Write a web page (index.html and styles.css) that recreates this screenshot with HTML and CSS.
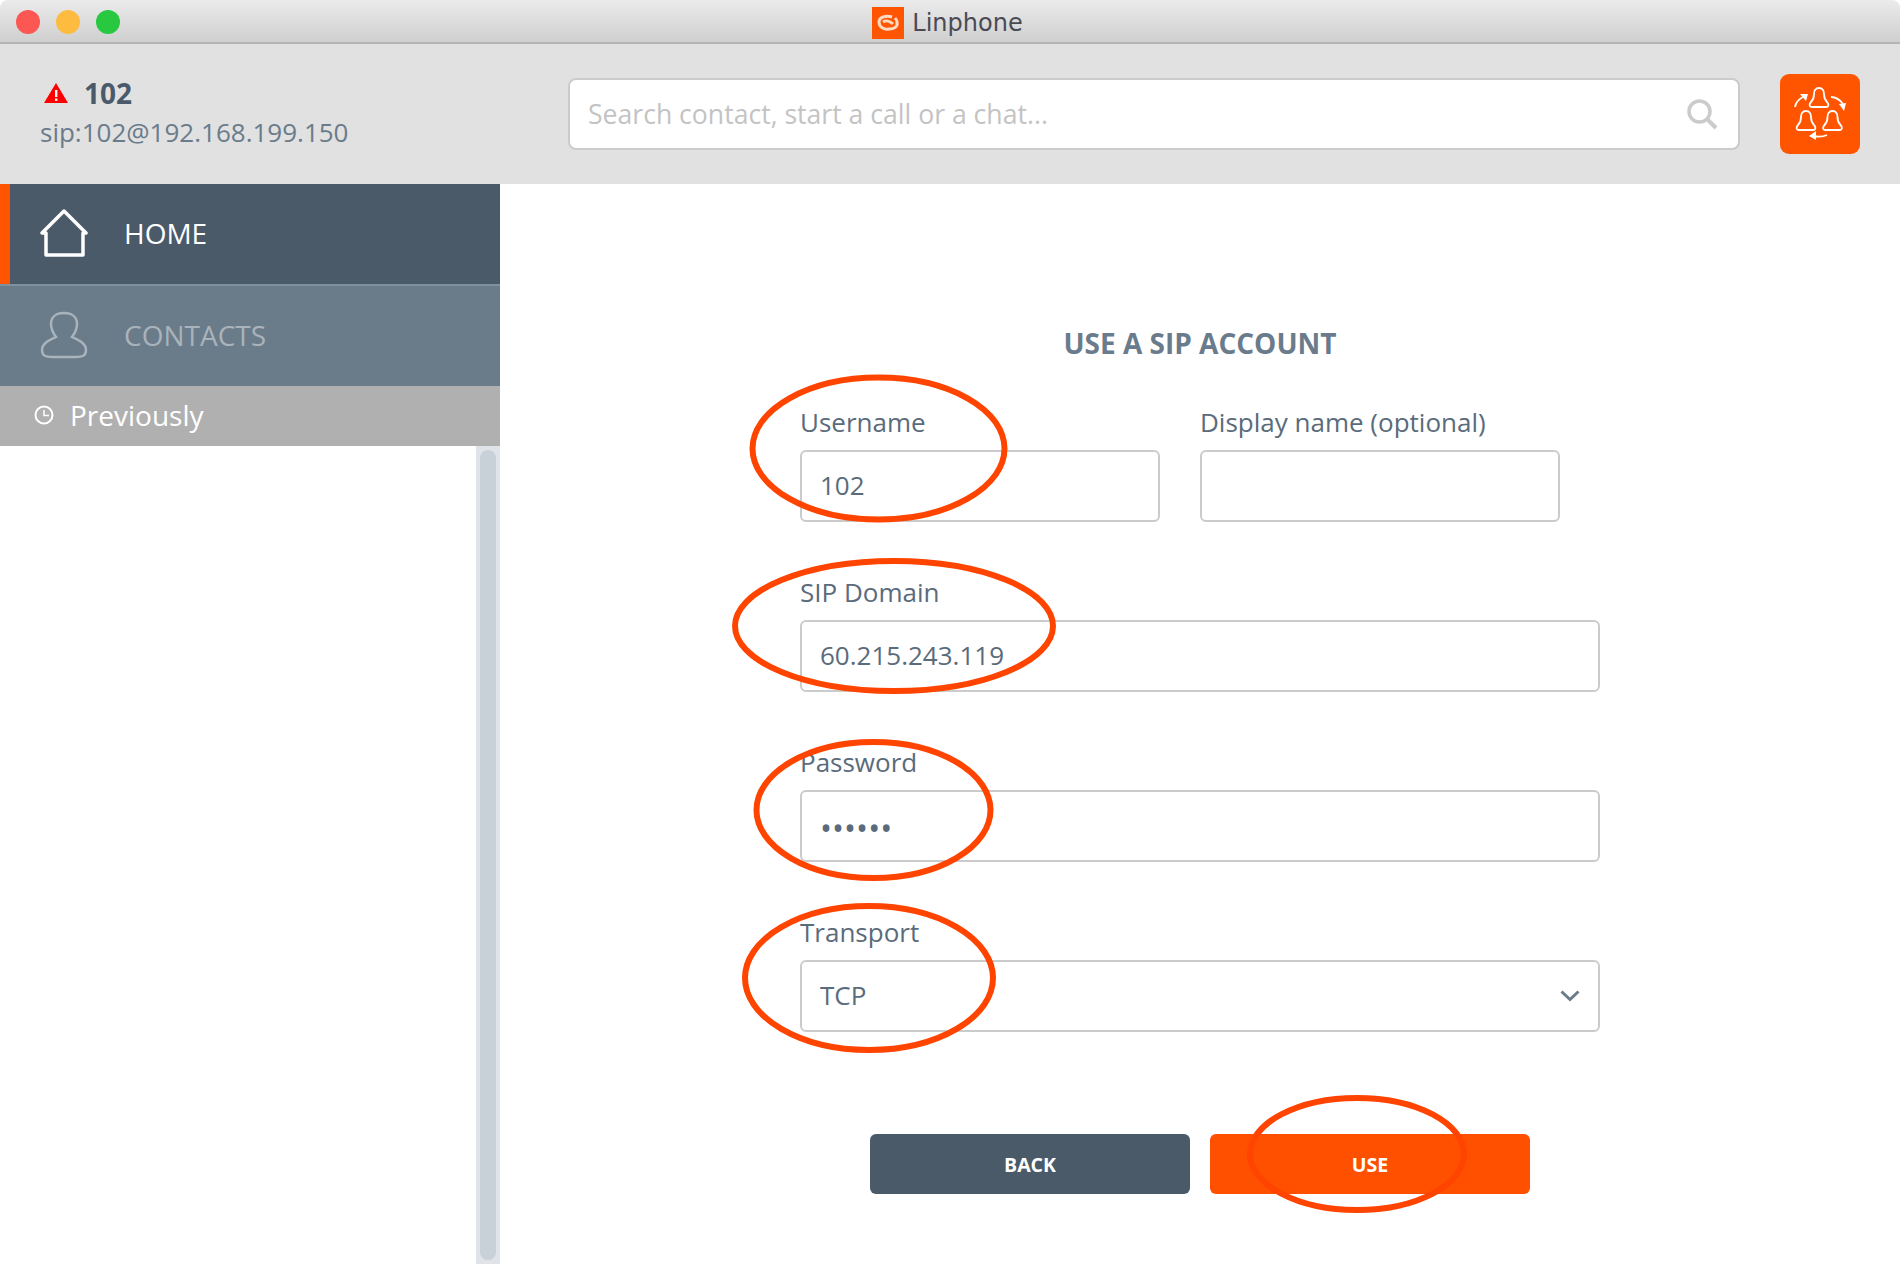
FILE: index.html
```html
<!DOCTYPE html>
<html lang="en">
<head>
    <meta charset="UTF-8">
    <meta name="viewport" content="width=device-width, initial-scale=1.0">
    <title>Linphone</title>
    <link rel="stylesheet" href="styles.css">
</head>
<body>
    <div class="window">
        <div class="titlebar">
            <div class="lights">
                <span class="light red"></span>
                <span class="light yellow"></span>
                <span class="light green"></span>
            </div>
            <div class="app-title">
                <svg class="app-logo" viewBox="0 0 32 32">
                    <rect width="32" height="32" fill="#ff5500"/>
                    <path d="M20 10 C14 8 7 10 7 15 C7 20 12 23 17 22 C22 22 26 20 25 15 C25 13 24 12 23 11" fill="none" stroke="#ffd9c4" stroke-width="3"/>
                    <path d="M11 15 C14 13 18 14 21 17" fill="none" stroke="#ffd9c4" stroke-width="3"/>
                </svg>
                <span>Linphone</span>
            </div>
        </div>

        <header class="topbar">
            <div class="account">
                <div class="account-name">
                    <svg class="warn" viewBox="0 0 24 20">
                        <path d="M12 0 L24 20 H0 Z" fill="#ff0000"/>
                        <rect x="11" y="7" width="2.4" height="7" fill="#fff"/>
                        <rect x="11" y="15.5" width="2.4" height="2.4" fill="#fff"/>
                    </svg>
                    <span>102</span>
                </div>
                <div class="account-uri">sip:102@192.168.199.150</div>
            </div>
            <div class="search">
                <span class="search-text">Search contact, start a call or a chat...</span>
                <svg class="search-icon" viewBox="0 0 32 32">
                    <circle cx="13.5" cy="13.5" r="10.5" fill="none" stroke="#cbcbcb" stroke-width="3.5"/>
                    <path d="M21 21 L30 30" stroke="#cbcbcb" stroke-width="4"/>
                </svg>
            </div>
            <button class="conf-btn">
                <svg viewBox="0 0 80 80" width="80" height="80">
                    <g fill="none" stroke="#fff" stroke-width="1.8">
                        <path transform="translate(39 14)" d="M0 0 C-3.5 0 -5 3 -5 6 C-5 10 -6 12 -8 14 C-10 16 -10 19 -7 19 H7 C10 19 10 16 8 14 C6 12 5 10 5 6 C5 3 3.5 0 0 0 Z"/>
                        <path transform="translate(26 37)" d="M0 0 C-3.5 0 -5 3 -5 6 C-5 10 -6 12 -8 14 C-10 16 -10 19 -7 19 H7 C10 19 10 16 8 14 C6 12 5 10 5 6 C5 3 3.5 0 0 0 Z"/>
                        <path transform="translate(52.5 37)" d="M0 0 C-3.5 0 -5 3 -5 6 C-5 10 -6 12 -8 14 C-10 16 -10 19 -7 19 H7 C10 19 10 16 8 14 C6 12 5 10 5 6 C5 3 3.5 0 0 0 Z"/>
                        <path d="M15 33 C16 28 19 25 23 23"/>
                        <path d="M51 23 C56 23 60 26 63 30"/>
                        <path d="M47 61 C43 63 38 63 33 62"/>
                    </g>
                    <g fill="#fff">
                        <path d="M20 20 L28 20 L26 27 Z"/>
                        <path d="M59 30 L66 29 L64 37 Z"/>
                        <path d="M36 57 L36 66 L29 62 Z"/>
                    </g>
                </svg>
            </button>
        </header>

        <div class="content">
            <aside class="sidebar">
                <nav class="menu">
                    <div class="menu-item active">
                        <svg class="menu-icon" viewBox="0 0 48 48">
                            <path d="M2 24 L24 2 L46 24 H43 V46 H6 V24 Z" fill="none" stroke="#fff" stroke-width="3.5" stroke-linejoin="round"/>
                        </svg>
                        <span>HOME</span>
                    </div>
                    <div class="menu-item">
                        <svg class="menu-icon" viewBox="0 0 48 48">
                            <path d="M24 2 C16 2 11 6 11 13 C11 18 13 22 16 26 C10 29 2 32 2 39 C2 45 6 46 12 46 H36 C42 46 46 45 46 39 C46 32 38 29 32 26 C35 22 37 18 37 13 C37 6 32 2 24 2 Z" fill="none" stroke="#a9b3bb" stroke-width="2.5"/>
                        </svg>
                        <span>CONTACTS</span>
                    </div>
                </nav>
                <div class="previously">
                    <svg class="clock" viewBox="0 0 20 20">
                        <circle cx="10" cy="10" r="8.5" fill="none" stroke="#fff" stroke-width="2"/>
                        <path d="M10 5 V10.5 H15" fill="none" stroke="#fff" stroke-width="1.5"/>
                    </svg>
                    <span>Previously</span>
                </div>
                <div class="timeline">
                    <div class="scrollbar"><div class="thumb"></div></div>
                </div>
            </aside>

            <main class="main">
                <form class="sip-form">
                    <h2>USE A SIP ACCOUNT</h2>
                    <div class="row">
                        <div class="group half">
                            <label>Username</label>
                            <div class="field">102</div>
                        </div>
                        <div class="group half">
                            <label>Display name (optional)</label>
                            <div class="field"></div>
                        </div>
                    </div>
                    <div class="group">
                        <label>SIP Domain</label>
                        <div class="field">60.215.243.119</div>
                    </div>
                    <div class="group">
                        <label>Password</label>
                        <div class="field dots">••••••</div>
                    </div>
                    <div class="group">
                        <label>Transport</label>
                        <div class="field select">
                            <span>TCP</span>
                            <svg class="chevron" viewBox="0 0 20 12">
                                <path d="M1.5 1.5 L10 9.5 L18.5 1.5" fill="none" stroke="#6a7b89" stroke-width="3"/>
                            </svg>
                        </div>
                    </div>
                    <div class="actions">
                        <button type="button" class="btn back">BACK</button>
                        <button type="button" class="btn use">USE</button>
                    </div>
                </form>
            </main>
        </div>

        <!-- hand drawn marks on top of the screenshot -->
        <svg class="marks" viewBox="0 0 1900 1264">
            <g fill="none" stroke="#ff4400" stroke-width="6">
                <ellipse cx="878.5" cy="448.5" rx="126" ry="71"/>
                <ellipse cx="894" cy="626" rx="159" ry="65"/>
                <ellipse cx="873.5" cy="810" rx="117" ry="68"/>
                <ellipse cx="869" cy="978" rx="124" ry="72"/>
                <ellipse cx="1357" cy="1154" rx="107" ry="56"/>
            </g>
        </svg>
    </div>
</body>
</html>
```

FILE: styles.css
```css
* {
    box-sizing: border-box;
}
body {
    margin: 0;
    background-color: #ffffff;
    font-family: "Open Sans", sans-serif;
    color: #5a6b7b;
}
.window {
    position: relative;
    display: flex;
    flex-direction: column;
    width: 1900px;
    height: 1264px;
    overflow: hidden;
}
.titlebar {
    position: relative;
    display: flex;
    align-items: center;
    justify-content: center;
    height: 44px;
    flex-shrink: 0;
    border-bottom: 2px solid #b4b4b4;
    border-radius: 8px 8px 0 0;
    background: linear-gradient(#ebebeb, #cfcfcf);
}
.lights {
    position: absolute;
    top: 10px;
    left: 16px;
    display: flex;
    gap: 16px;
}
.light {
    width: 24px;
    height: 24px;
    border-radius: 50%;
}
.red {
    background-color: #fc5753;
}
.yellow {
    background-color: #fdbc40;
}
.green {
    background-color: #28c840;
}
.app-title {
    display: flex;
    align-items: center;
    gap: 8px;
    margin-right: 5px;
    padding-top: 4px;
    font-family: "DejaVu Sans", sans-serif;
    font-size: 24px;
    color: #4a4a55;
}
.app-logo {
    width: 32px;
    height: 32px;
}
.topbar {
    display: flex;
    align-items: center;
    height: 140px;
    flex-shrink: 0;
    background-color: #e1e1e1;
}
.account {
    width: 568px;
    padding-left: 40px;
    padding-bottom: 3px;
}
.account-name {
    display: flex;
    align-items: center;
    gap: 16px;
    margin-bottom: 2px;
    padding-left: 4px;
    font-size: 28px;
    font-weight: 700;
    line-height: 36px;
    color: #4a5a6b;
}
.warn {
    width: 24px;
    height: 20px;
}
.account-uri {
    font-size: 26px;
    line-height: 38px;
    color: #6a7b8b;
}
.search {
    display: flex;
    align-items: center;
    justify-content: space-between;
    width: 1172px;
    height: 72px;
    padding: 0 20px 0 18px;
    border: 2px solid #cbcbcb;
    border-radius: 8px;
    background-color: #ffffff;
}
.search-text {
    font-size: 26.6px;
    color: #c3c3c3;
}
.search-icon {
    width: 32px;
    height: 32px;
}
.conf-btn {
    width: 80px;
    height: 80px;
    margin-left: 40px;
    padding: 0;
    border: none;
    border-radius: 9px;
    background-color: #ff5500;
}
.content {
    display: flex;
    flex: 1;
    min-height: 0;
}
.sidebar {
    display: flex;
    flex-direction: column;
    width: 500px;
    flex-shrink: 0;
}
.menu-item {
    display: flex;
    align-items: center;
    gap: 36px;
    height: 102px;
    padding-left: 40px;
    padding-bottom: 2px;
    border-top: 2px solid #7f909e;
    background-color: #6a7b89;
    font-size: 28px;
    color: #a9b3bb;
}
.menu-item.active {
    height: 100px;
    padding-left: 30px;
    border-top: none;
    border-left: 10px solid #ff5500;
    background-color: #4a5a68;
    color: #ffffff;
}
.menu-icon {
    width: 48px;
    height: 48px;
}
.previously {
    display: flex;
    align-items: center;
    gap: 16px;
    height: 60px;
    padding-left: 34px;
    padding-bottom: 2px;
    background-color: #b0b0b0;
    font-size: 28px;
    color: #ffffff;
}
.clock {
    width: 20px;
    height: 20px;
}
.timeline {
    display: flex;
    flex: 1;
    justify-content: flex-end;
}
.scrollbar {
    width: 24px;
    padding: 4px;
    background-color: #e0e4e8;
}
.thumb {
    height: 100%;
    border-radius: 8px;
    background-color: #c8d0d8;
}
.main {
    display: flex;
    flex: 1;
    justify-content: center;
    padding-top: 137px;
}
.sip-form {
    width: 800px;
}
h2 {
    margin: 0 0 39px;
    font-size: 28px;
    font-weight: 700;
    line-height: 44px;
    text-align: center;
    color: #6a7b8b;
}
.row {
    display: flex;
    gap: 40px;
}
.group {
    margin-bottom: 52px;
}
.half {
    width: 360px;
}
label {
    display: block;
    height: 46px;
    font-size: 26px;
    line-height: 36px;
    color: #5a6b7b;
}
.field {
    display: flex;
    align-items: center;
    justify-content: space-between;
    height: 72px;
    padding: 0 18px 2px;
    border: 2px solid #cbcbcb;
    border-radius: 6px;
    font-size: 26px;
    color: #5a6b7b;
}
.field.dots {
    padding: 2px 18px 0;
    font-size: 32px;
}
.chevron {
    width: 20px;
    height: 12px;
    margin-top: 2px;
}
.actions {
    display: flex;
    justify-content: center;
    gap: 20px;
    margin-top: 102px;
}
.btn {
    width: 320px;
    height: 60px;
    border: none;
    border-radius: 6px;
    font-family: "Open Sans", sans-serif;
    font-size: 19.5px;
    font-weight: 700;
    color: #ffffff;
}
.back {
    background-color: #4a5a68;
}
.use {
    background-color: #ff5000;
}
.marks {
    position: absolute;
    top: 0;
    left: 0;
    width: 1900px;
    height: 1264px;
    pointer-events: none;
}
```
